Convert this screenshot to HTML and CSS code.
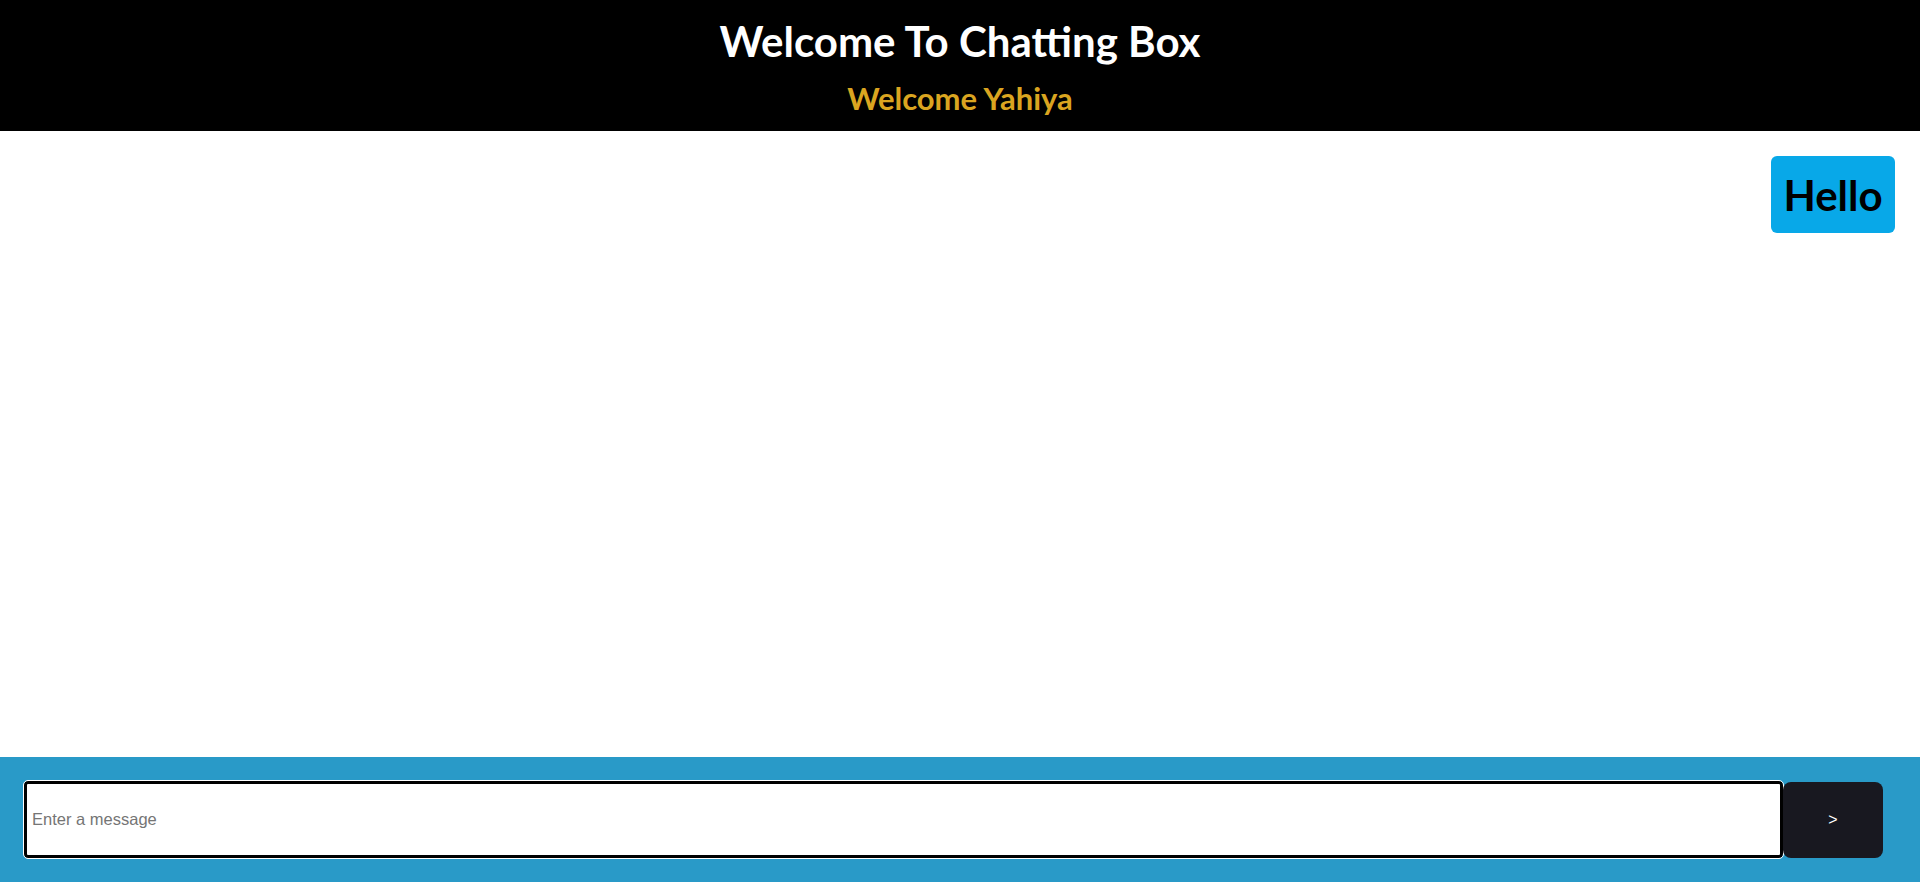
FILE: index.html
```html
<!DOCTYPE html>
<html lang="en">
<head>
<meta charset="utf-8">
<title>Chatting Box</title>
<link rel="stylesheet" href="styles.css">
</head>
<body>
<div class="app">
  <header class="header">
    <h1 class="title">Welcome To Chatting Box</h1>
    <h2 class="subtitle">Welcome Yahiya</h2>
  </header>
  <main class="messages">
    <div class="bubble">Hello</div>
  </main>
  <form class="composer">
    <input class="composer-input" type="text" placeholder="Enter a message">
    <button class="composer-send" type="button">&gt;</button>
  </form>
</div>
</body>
</html>
```
FILE: styles.css
```css
* { box-sizing: border-box; }
html, body { margin: 0; padding: 0; height: 100%; }
body { font-family: "Lato", "Open Sans", sans-serif; background: #fff; }
.app { display: flex; flex-direction: column; height: 882px; }
.header {
  background: #000;
  height: 131px;
  display: flex;
  flex-direction: column;
  align-items: center;
  padding-top: 14px;
}
.title {
  margin: 0;
  color: #fff;
  font-size: 42px;
  font-weight: 700;
  line-height: 54px;
}
.subtitle {
  margin: 11px 0 0;
  color: #daa520;
  font-size: 31px;
  font-weight: 700;
  line-height: 38px;
}
.messages {
  flex: 1;
  display: flex;
  flex-direction: column;
  align-items: flex-end;
  padding: 25px 25px 0 0;
}
.bubble {
  background: #08a8e8;
  color: #000;
  font-size: 42px;
  font-weight: 700;
  border-radius: 6px;
  height: 77px;
  width: 124px;
  display: flex;
  align-items: center;
  justify-content: center;
}
.composer {
  margin: 0;
  height: 125px;
  background: #299ac8;
  display: flex;
  align-items: center;
  padding: 0 37px 0 24px;
}
.composer-input {
  flex: 1;
  height: 77px;
  border: 3px solid #000;
  border-radius: 4px;
  outline: 1px solid #fff;
  padding: 0 5px;
  font-family: "Liberation Sans", Arial, sans-serif;
  font-size: 16.5px;
  color: #000;
  background: #fff;
}
.composer-input::placeholder { color: #757575; }
.composer-send {
  width: 100px;
  height: 76px;
  border: none;
  border-radius: 8px;
  background: #181820;
  color: #fff;
  font-family: "Liberation Sans", Arial, sans-serif;
  font-size: 16px;
}
```
